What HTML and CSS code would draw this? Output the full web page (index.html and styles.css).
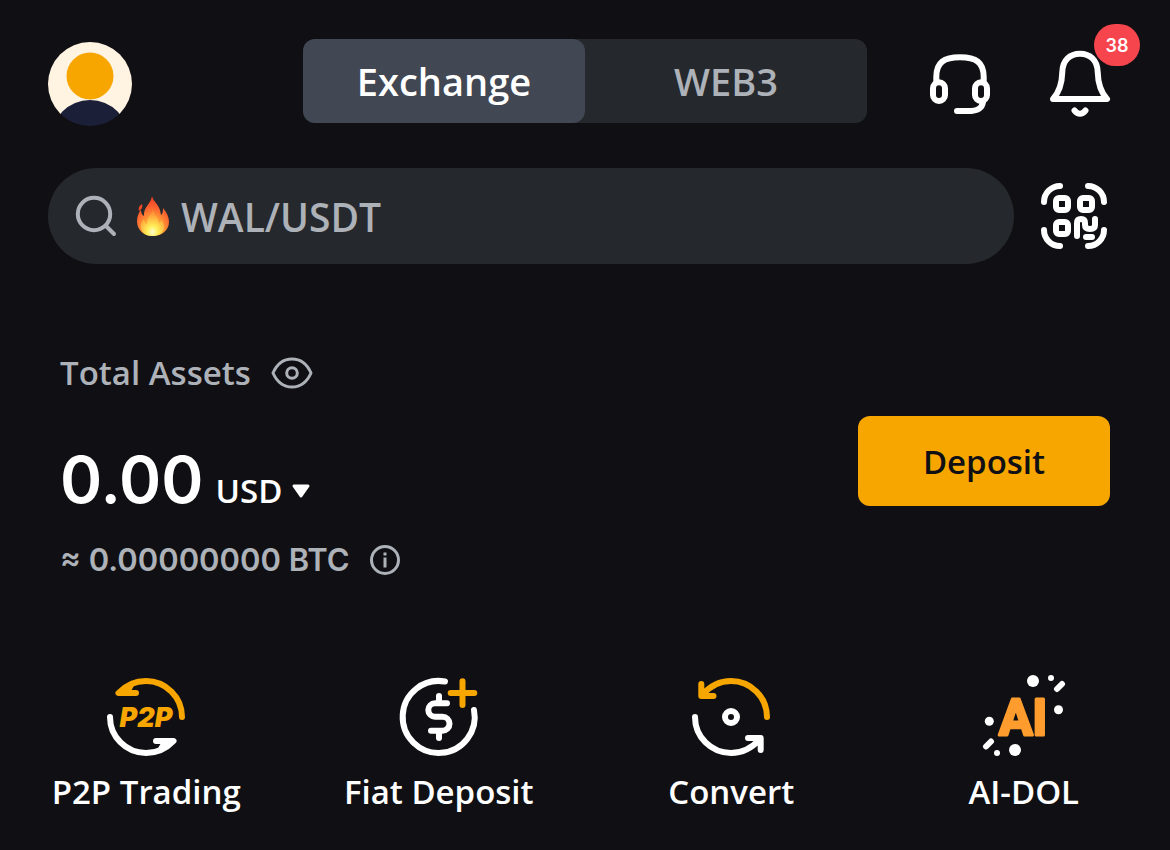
FILE: index.html
```html
<!DOCTYPE html>
<html lang="en">
<head>
<meta charset="utf-8">
<meta name="viewport" content="width=device-width, initial-scale=1">
<title>Exchange</title>
<link rel="stylesheet" href="styles.css">
</head>
<body>
<header class="topbar">
  <button class="avatar" type="button" aria-label="Profile">
    <svg width="84" height="84" viewBox="0 0 84 84">
      <defs><clipPath id="face"><circle cx="42" cy="42" r="42"/></clipPath></defs>
      <g clip-path="url(#face)">
        <rect width="84" height="72" fill="#fff3e1"/>
        <circle cx="42" cy="34" r="23.5" fill="#f7a600"/>
        <circle cx="42" cy="97" r="39" fill="#1b2038"/>
      </g>
    </svg>
  </button>
  <nav class="tabs">
    <button class="tab tab-active" type="button">Exchange</button>
    <button class="tab" type="button">WEB3</button>
  </nav>
  <div class="actions">
    <button class="icon-button" type="button" aria-label="Support">
      <svg class="line" width="60" height="60" viewBox="0 0 60 60">
        <path d="M6.3 27V23C6.3 8.500 14 3.300 30 3.300S53.700 8.500 53.700 23V27"/>
        <rect x="3" y="28.300" width="12" height="18.700" rx="6"/>
        <rect x="45" y="28.300" width="12" height="18.700" rx="6"/>
        <path d="M53 48C52 55 47 57 38 57H27"/>
      </svg>
    </button>
    <button class="icon-button" type="button" aria-label="Notifications">
      <svg class="line" width="60" height="68" viewBox="0 0 60 68">
        <path d="M3 49C9 42.500 12 33 12.300 22C12.600 10 20 3.700 30 3.700S47.400 10 47.700 22C48 33 51 42.500 57 49Z"/>
        <path d="M24.500 60.500Q30 67 35.500 60.500"/>
      </svg>
      <span class="badge">38</span>
    </button>
  </div>
</header>

<div class="search-row">
  <label class="search">
    <svg class="muted" width="44" height="44" viewBox="0 0 44 44" aria-hidden="true">
      <circle cx="20" cy="20" r="16.200"/><path d="M32 32L40 40"/>
    </svg>
    <svg class="flame" width="34" height="42" viewBox="0 0 34 42" aria-hidden="true">
      <defs>
        <radialGradient id="fire" cx=".5" cy=".85" r=".8">
          <stop offset="0" stop-color="#ffc943"/><stop offset=".4" stop-color="#ff9a35"/>
          <stop offset=".7" stop-color="#fb6430"/><stop offset="1" stop-color="#ee4023"/>
        </radialGradient>
        <radialGradient id="glow" cx=".5" cy=".85" r=".75">
          <stop offset="0" stop-color="#fffbd0"/><stop offset=".3" stop-color="#ffef58"/><stop offset=".8" stop-color="#ffa63b"/><stop offset="1" stop-color="#ff8a38"/>
        </radialGradient>
      </defs>
      <path fill="url(#fire)" d="M16 1C17 7 24 9 25 20C27 19 27 15 27 13C31 18 33 22 33 27C33 35 26 41 17 41S1 35 1 26C1 21 3 17 5 15C5 18 6 20 8 21C7 12 15 9 16 1Z"/>
      <path fill="#ee4a27" d="M6 9C7 12 6 14 3 16C2 13 3 11 6 9Z"/>
      <path fill="url(#glow)" d="M17 14C17 19 23 22 23 28C25 27 25 25 25 24C28 28 29 31 28 34C26 39 22 41 16 41C10 41 6 38 5 33C4 29 6 26 8 24C8 26 9 28 11 29C10 22 16 20 17 14Z"/>
    </svg>
    <input class="search-input" type="search" placeholder="WAL/USDT" aria-label="Search">
  </label>
  <button class="icon-button" type="button" aria-label="Scan QR code">
    <svg class="line" width="66" height="66" viewBox="0 0 66 66">
      <path d="M19 3A16 16 0 0 0 3 19M47 3A16 16 0 0 1 63 19M3 47A16 16 0 0 0 19 63M63 47A16 16 0 0 1 47 63"/>
      <rect x="15" y="15" width="12" height="12" rx="3"/>
      <rect x="39" y="15" width="12" height="12" rx="3"/>
      <rect x="15" y="39" width="12" height="12" rx="3"/>
      <path d="M36 53V40Q36 36 40 36T44 40V42Q44 46 49 46T54 42V36M45 54H51"/>
    </svg>
  </button>
</div>

<main>
  <section class="assets">
    <div class="balance">
      <div class="caption">
        <span>Total Assets</span>
        <button class="icon-button" type="button" aria-label="Hide balance">
          <svg class="muted thin" width="42" height="32" viewBox="0 0 42 32">
            <path d="M2 16C6 7 12 2 21 2S36 7 40 16C36 25 30 30 21 30S6 25 2 16Z"/><circle cx="21" cy="16" r="5.300"/>
          </svg>
        </button>
      </div>
      <div class="amount">
        <span class="value">0.00</span>
        <button class="currency" type="button">USD
          <svg width="18" height="14" viewBox="0 0 18 14"><path fill="#fff" stroke="#fff" stroke-width="3" stroke-linejoin="round" d="M2 2H16L9 12Z"/></svg>
        </button>
      </div>
      <div class="estimate">
        <span>≈ 0.00000000 BTC</span>
        <button class="icon-button" type="button" aria-label="About this estimate">
          <svg class="muted thin" width="30" height="30" viewBox="0 0 30 30"><circle cx="15" cy="15" r="13.500"/><path stroke-linecap="butt" d="M15 7.500V10.500M15 12.500V22.500"/></svg>
        </button>
      </div>
    </div>
    <button class="deposit" type="button">Deposit</button>
  </section>

  <nav class="shortcuts">
    <a class="shortcut" href="#p2p">
      <svg class="line" width="84" height="84" viewBox="-3 -3 84 84" aria-hidden="true">
        <path class="gold" d="M75 39A36 36 0 0 0 39 3C28 3 19 7 11.500 15H29"/>
        <path class="gold" d="M14 14Q19 9 24 7L20 14Z"/>
        <path d="M3 39A36 36 0 0 0 39 75C50 75 59 71 66.500 63H49"/>
        <path d="M64 64Q59 69 54 71L58 64Z"/>
        <text class="p2p" x="39" y="49" text-anchor="middle">P2P</text>
      </svg>
      <span>P2P Trading</span>
    </a>
    <a class="shortcut" href="#fiat">
      <svg class="line" width="84" height="84" viewBox="-3 -3 84 84" aria-hidden="true">
        <path d="M45 3.500A36 36 0 1 0 74 32"/>
        <path d="M47 25.300H35A6.700 6.700 0 0 0 35 38.700H42.500A7 7 0 0 1 42.500 52.700H31M39 18V24M39 54V60"/>
        <path class="gold" d="M50.700 15H74.300M62.500 3.300V27"/>
      </svg>
      <span>Fiat Deposit</span>
    </a>
    <a class="shortcut" href="#convert">
      <svg class="line" width="84" height="84" viewBox="-3 -3 84 84" aria-hidden="true">
        <path class="gold" d="M75 39A36 36 0 0 0 39 3C27 3 18 8 10 17M9.300 6V18H21.500"/>
        <path d="M3 39A36 36 0 0 0 39 75C51 75 60 70 68 61M56 60H68.700V72"/>
        <circle cx="39" cy="39" r="6"/>
      </svg>
      <span>Convert</span>
    </a>
    <a class="shortcut" href="#ai-dol">
      <svg class="line" width="84" height="84" viewBox="0 0 84 84" aria-hidden="true">
        <g fill="#fff" stroke="none">
          <circle cx="51" cy="6" r="6"/><circle cx="69" cy="3" r="3"/><circle cx="76.500" cy="34.700" r="4.500"/>
          <circle cx="7.300" cy="46.300" r="4.500"/><circle cx="15" cy="78" r="3"/><circle cx="33" cy="75" r="6"/>
        </g>
        <path d="M75 14L80 9M4 71.500L9 66.500"/>
        <text class="ai" x="41" y="60" text-anchor="middle">AI</text>
      </svg>
      <span>AI-DOL</span>
    </a>
  </nav>
</main>
</body>
</html>
```
FILE: styles.css
```css
* { box-sizing: border-box; }

body {
  margin: 0;
  background: #101014;
  color: #fff;
  font-family: "Open Sans", "Noto Sans", sans-serif;
  font-weight: 600;
}

button, input { font: inherit; color: inherit; }
button { padding: 0; border: 0; background: none; cursor: pointer; }
svg { display: block; flex: none; overflow: visible; }

.line, .muted {
  fill: none;
  stroke: #fff;
  stroke-width: 6;
  stroke-linecap: round;
  stroke-linejoin: round;
}
.muted { stroke: #adb1b8; stroke-width: 4; }
.thin { stroke-width: 3; }
.gold { stroke: #f7a600; }
.icon-button { position: relative; flex: none; }

.topbar {
  display: grid;
  grid-template-columns: 1fr minmax(0, 564px) 1fr;
  align-items: end;
  padding: 39px 48px 0;
}
.avatar { justify-self: start; margin-top: 3px; border-radius: 50%; }
.tabs {
  display: flex;
  align-self: start;
  border-radius: 12px;
  background: #25282c;
}
.tab {
  flex: 1;
  height: 84px;
  border-radius: 12px;
  color: #adb1b8;
  font-size: 38px;
}
.tab-active { background: #414753; color: #fff; }
.actions {
  display: flex;
  align-items: center;
  justify-content: flex-end;
  gap: 60px;
  height: 84px;
  padding-right: 12px;
}
.badge {
  position: absolute;
  top: -26px;
  left: 44px;
  width: 46px;
  height: 42px;
  border-radius: 21px;
  background: #f6454d;
  font-family: Inter, sans-serif;
  font-size: 18px;
  line-height: 44px;
  text-align: center;
}

.search-row {
  display: flex;
  align-items: center;
  gap: 27px;
  padding: 42px 63px 0 48px;
}
.search {
  display: flex;
  flex: 1;
  align-items: center;
  height: 96px;
  padding: 0 26px;
  border-radius: 48px;
  background: #25282c;
}
.flame { margin: 0 11px 0 18px; }
.search-input {
  flex: 1;
  min-width: 0;
  padding: 0;
  border: 0;
  outline: 0;
  background: none;
  color: #fff;
  font-size: 39px;
}
.search-input::placeholder { color: #adb1b8; opacity: 1; }

.assets {
  display: flex;
  align-items: flex-start;
  justify-content: space-between;
  padding: 85px 60px 0;
}
.caption, .estimate {
  display: flex;
  align-items: center;
  gap: 20px;
  color: #adb1b8;
  font-size: 33px;
  line-height: 48px;
}
.estimate {
  font-family: Inter, sans-serif;
  font-size: 31px;
  font-weight: 600;
}
.amount {
  display: flex;
  align-items: baseline;
  gap: 12px;
  padding: 35px 0 8px;
}
.value {
  font-family: Inter, sans-serif;
  font-size: 64px;
  line-height: 96px;
}
.currency {
  display: flex;
  align-items: center;
  gap: 10px;
  font-size: 33px;
}
.deposit {
  width: 252px;
  height: 90px;
  margin-top: 67px;
  border-radius: 12px;
  background: #f7a600;
  color: #101014;
  font-size: 33px;
}

.shortcuts {
  display: grid;
  grid-template-columns: repeat(4, 1fr);
  padding-top: 91px;
}
.shortcut {
  display: flex;
  flex-direction: column;
  align-items: center;
  gap: 9px;
  color: inherit;
  font-size: 33px;
  line-height: 48px;
  text-decoration: none;
}
.p2p { fill: #f7a600; stroke: none; font: italic 900 27px Inter, sans-serif; }
.ai {
  fill: #ff9c2e;
  stroke: #ff9c2e;
  stroke-width: 3;
  font: 700 50px Roboto, sans-serif;
}
```
